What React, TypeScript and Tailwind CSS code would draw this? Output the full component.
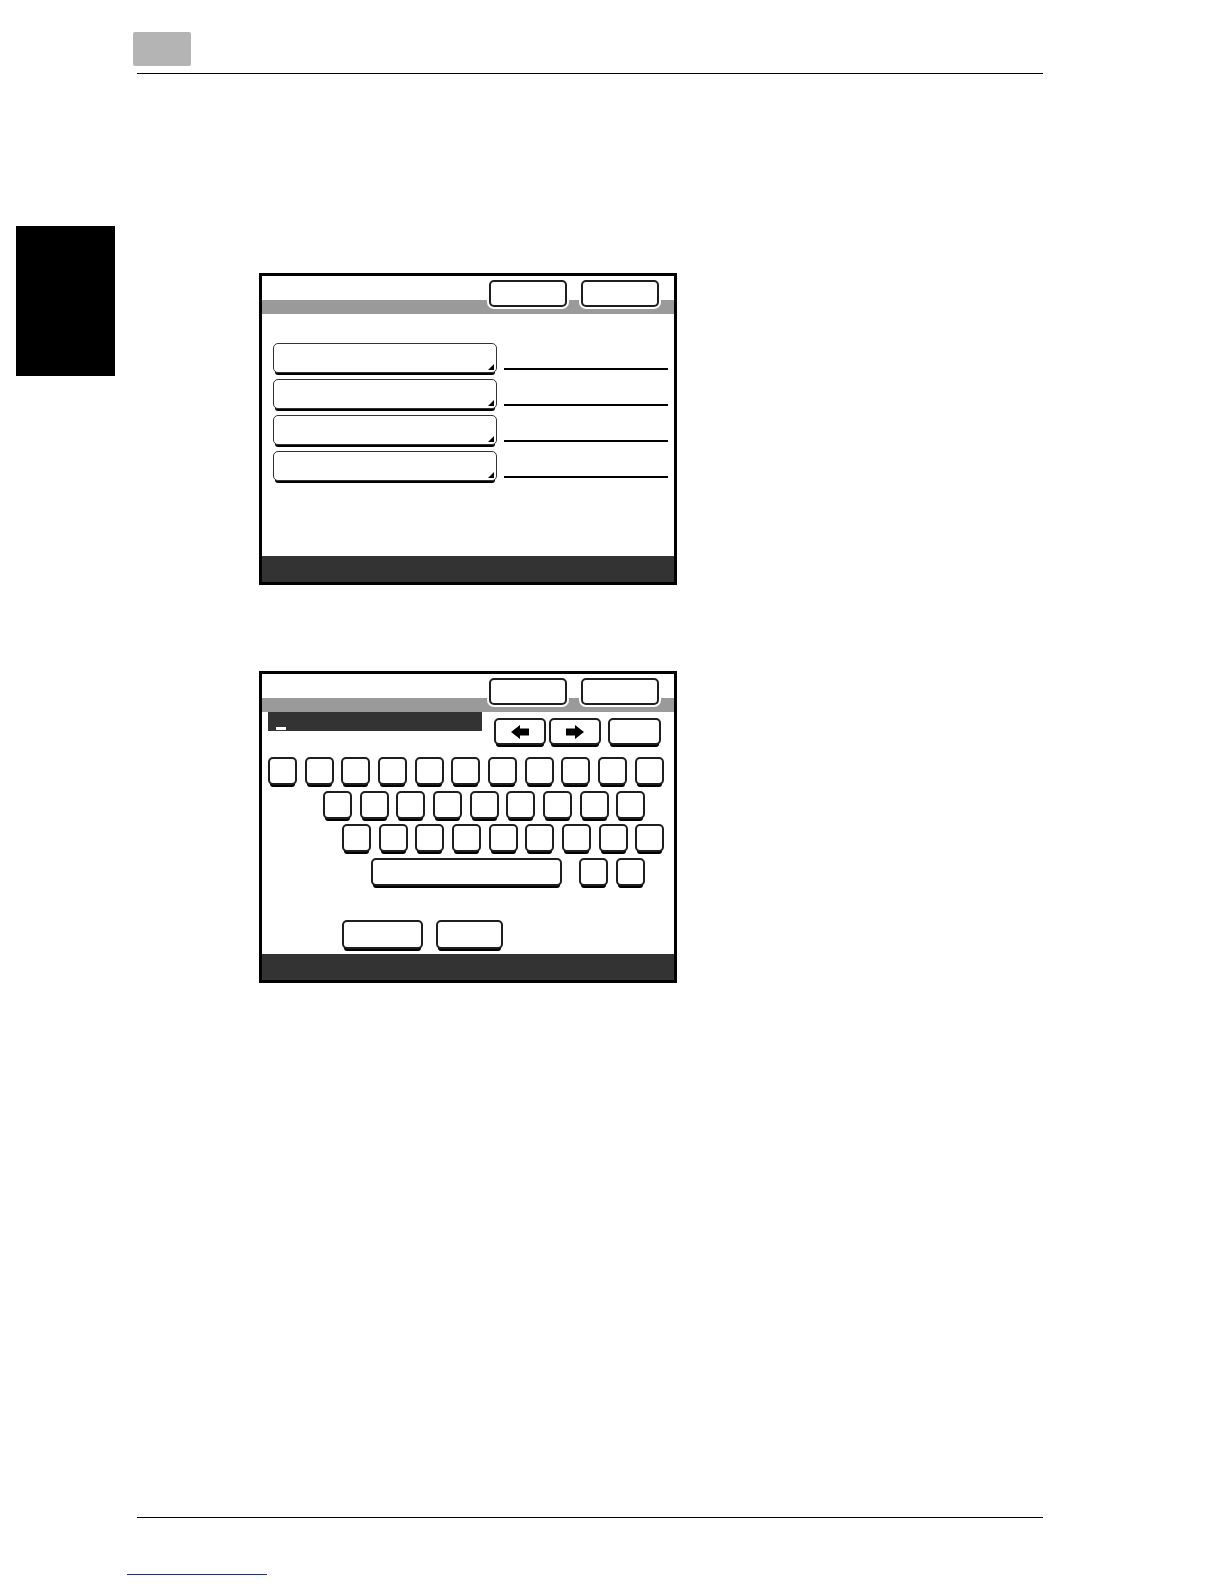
import type { ReactNode } from "react"

type KeyProps = {
  className?: string
  children?: ReactNode
}

// raised touch-panel key, the dark lip sits just under the bottom edge
const Key = ({ className = "h-[28px] w-[29px]", children }: KeyProps) => (
  <div
    className={`${className} flex shrink-0 items-center justify-center rounded-[5px] border-2 border-[#1e1e1e] bg-white shadow-[0_4px_0_-2px_#000]`}
  >
    {children}
  </div>
)

const Arrow = ({ flip }: { flip?: boolean }) => (
  <svg
    width="18"
    height="14"
    viewBox="0 0 18 14"
    className={flip ? "-scale-x-100" : ""}
  >
    <path d="M0 7L9 0V3.5H18V10.5H9V14Z" fill="#000" />
  </svg>
)

const PanelHeader = () => (
  <div className="flex h-[38px] shrink-0 items-start justify-end gap-[14px] bg-[linear-gradient(to_bottom,#fff_24px,#9a9a9a_24px)] pr-[15px] pt-[4px]">
    <div className="h-[27px] w-[78px] rounded-[5px] border-2 border-[#1e1e1e] bg-white shadow-[0_0_0_2px_#fff]" />
    <div className="h-[27px] w-[78px] rounded-[5px] border-2 border-[#1e1e1e] bg-white shadow-[0_0_0_2px_#fff]" />
  </div>
)

const Panel = ({ children }: { children: ReactNode }) => (
  <div className="flex h-[312px] w-[418px] flex-col border-[3px] border-black bg-white">
    <PanelHeader />
    {children}
    <div className="mt-auto h-[26px] shrink-0 bg-[#333]" />
  </div>
)

const FieldsPanel = () => (
  <Panel>
    <div className="ml-[11px] mt-[29px] flex flex-col">
      {[0, 1, 2, 3].map((i) => (
        <div key={i} className="flex h-[36px] items-start gap-[7px]">
          <div className="flex h-[30px] w-[224px] items-end justify-end rounded-[5px] border-[1.5px] border-[#333] bg-white pb-[2px] pr-[2px] shadow-[0_4px_0_-2px_#000]">
            <svg width="6" height="6" viewBox="0 0 6 6">
              <path d="M6 0V6H0Z" fill="#000" />
            </svg>
          </div>
          <div className="mt-[25px] h-[2px] w-[164px] bg-black" />
        </div>
      ))}
    </div>
  </Panel>
)

const row1 = Array.from({ length: 11 }, (_, i) => i)
const row2 = Array.from({ length: 9 }, (_, i) => i)

const KeyboardPanel = () => (
  <Panel>
    <div className="flex h-[45px] shrink-0 items-start">
      <div className="ml-[6px] flex h-[19px] w-[214px] items-end bg-[#333] pb-px pl-[8px]">
        <div className="h-[3px] w-[10px] bg-white" />
      </div>
      <div className="ml-[12px] mt-[6px] flex">
        <Key className="h-[27px] w-[52px]">
          <Arrow />
        </Key>
        <Key className="ml-[3px] h-[27px] w-[52px]">
          <Arrow flip />
        </Key>
        <Key className="ml-[7px] h-[27px] w-[53px]" />
      </div>
    </div>

    <div className="flex flex-col gap-[5.67px]">
      <div className="ml-[6px] flex gap-[7.67px]">
        {row1.map((i) => (
          <Key key={i} />
        ))}
      </div>
      <div className="ml-[61px] flex gap-[7.67px]">
        {row2.map((i) => (
          <Key key={i} />
        ))}
      </div>
      <div className="ml-[80px] flex gap-[7.67px]">
        {row2.map((i) => (
          <Key key={i} />
        ))}
      </div>
      <div className="ml-[109px] flex">
        <Key className="h-[28px] w-[191px]" />
        <Key className="ml-[17px] h-[28px] w-[29px]" />
        <Key className="ml-[7.67px] h-[28px] w-[29px]" />
      </div>
    </div>

    <div className="ml-[80px] mt-[34px] flex gap-[13px]">
      <Key className="h-[29px] w-[81px]" />
      <Key className="h-[29px] w-[67px]" />
    </div>
  </Panel>
)

export default function App() {
  return (
    <div className="flex h-[1584px] w-[1224px] flex-col bg-white font-['Liberation_Sans',sans-serif]">
      <div className="pt-[32px]">
        <div className="ml-[133px] h-[34px] w-[58px] rounded-[2px] bg-[#b4b4b4]" />
        <div className="ml-[137px] mt-[7px] h-px w-[906px] bg-black" />
      </div>

      <div className="flex items-start">
        <div className="ml-[16px] mt-[152px] h-[150px] w-[99px] bg-black" />
        <div className="ml-[144px] mt-[199px] flex flex-col gap-[86px]">
          <FieldsPanel />
          <KeyboardPanel />
        </div>
      </div>

      <div className="mt-auto pb-[9px]">
        <div className="ml-[137px] h-px w-[906px] bg-black" />
        <div className="ml-[127px] mt-[56px] h-px w-[140px] bg-[#26309a]" />
      </div>
    </div>
  )
}
